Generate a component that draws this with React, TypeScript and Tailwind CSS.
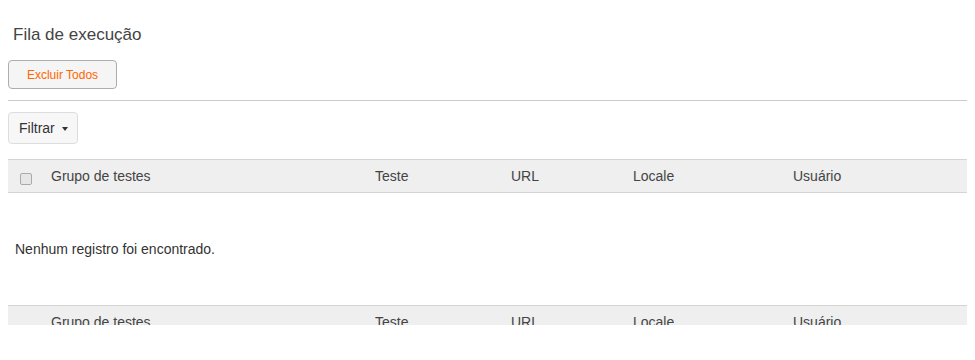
import { useState } from "react";

const columns = [
  { label: "Grupo de testes", w: "w-[324px]" },
  { label: "Teste", w: "w-[136px]" },
  { label: "URL", w: "w-[122px]" },
  { label: "Locale", w: "w-[160px]" },
  { label: "Usuário", w: "flex-1" },
];

function HeaderRow({ withCheckbox }: { withCheckbox: boolean }) {
  return (
    <div className="flex h-[34px] items-center border-y border-[#d4d4d4] bg-[#efefef] text-[14px] text-[#444]">
      <div className="w-[43px] pl-[12px]">
        {withCheckbox && (
          <span className="mt-[5px] block h-[12px] w-[12px] rounded-[2px] border border-[#aaa] bg-[#e6e6e6]" />
        )}
      </div>
      {columns.map((c) => (
        <div key={c.label} className={c.w}>
          {c.label}
        </div>
      ))}
    </div>
  );
}

export default function App() {
  const [rows] = useState<string[]>([]);

  return (
    <div className="h-[325px] overflow-hidden bg-white font-['Liberation_Sans',Arial,sans-serif]">
      <div className="w-[967px] pl-[8px]">
        <h2 className="pl-[5px] pt-[24px] text-[17px] leading-[22px] text-[#444]">Fila de execução</h2>
        <button className="mt-[14px] h-[29px] w-[109px] rounded-[4px] border border-[#adadad] bg-[#f5f5f5] text-[12px] text-[#f60]">
          Excluir Todos
        </button>
        <div className="mt-[11px] border-t border-[#ccc]" />
        <button className="mt-[11px] flex h-[32px] w-[70px] items-center gap-[7px] rounded-[4px] border border-[#ddd] bg-[#f7f7f7] pl-[10px] text-[14px] text-[#333]">
          Filtrar
          <svg width="6" height="4" viewBox="0 0 6 4" className="mt-[1px]">
            <path d="M0 0h6L3 4z" fill="#333" />
          </svg>
        </button>
        <div className="mt-[15px]">
          <HeaderRow withCheckbox />
          {rows.length === 0 && (
            <div className="flex h-[112px] items-center pl-[7px] text-[14px] text-[#333]">
              Nenhum registro foi encontrado.
            </div>
          )}
          <HeaderRow withCheckbox={false} />
        </div>
      </div>
    </div>
  );
}
